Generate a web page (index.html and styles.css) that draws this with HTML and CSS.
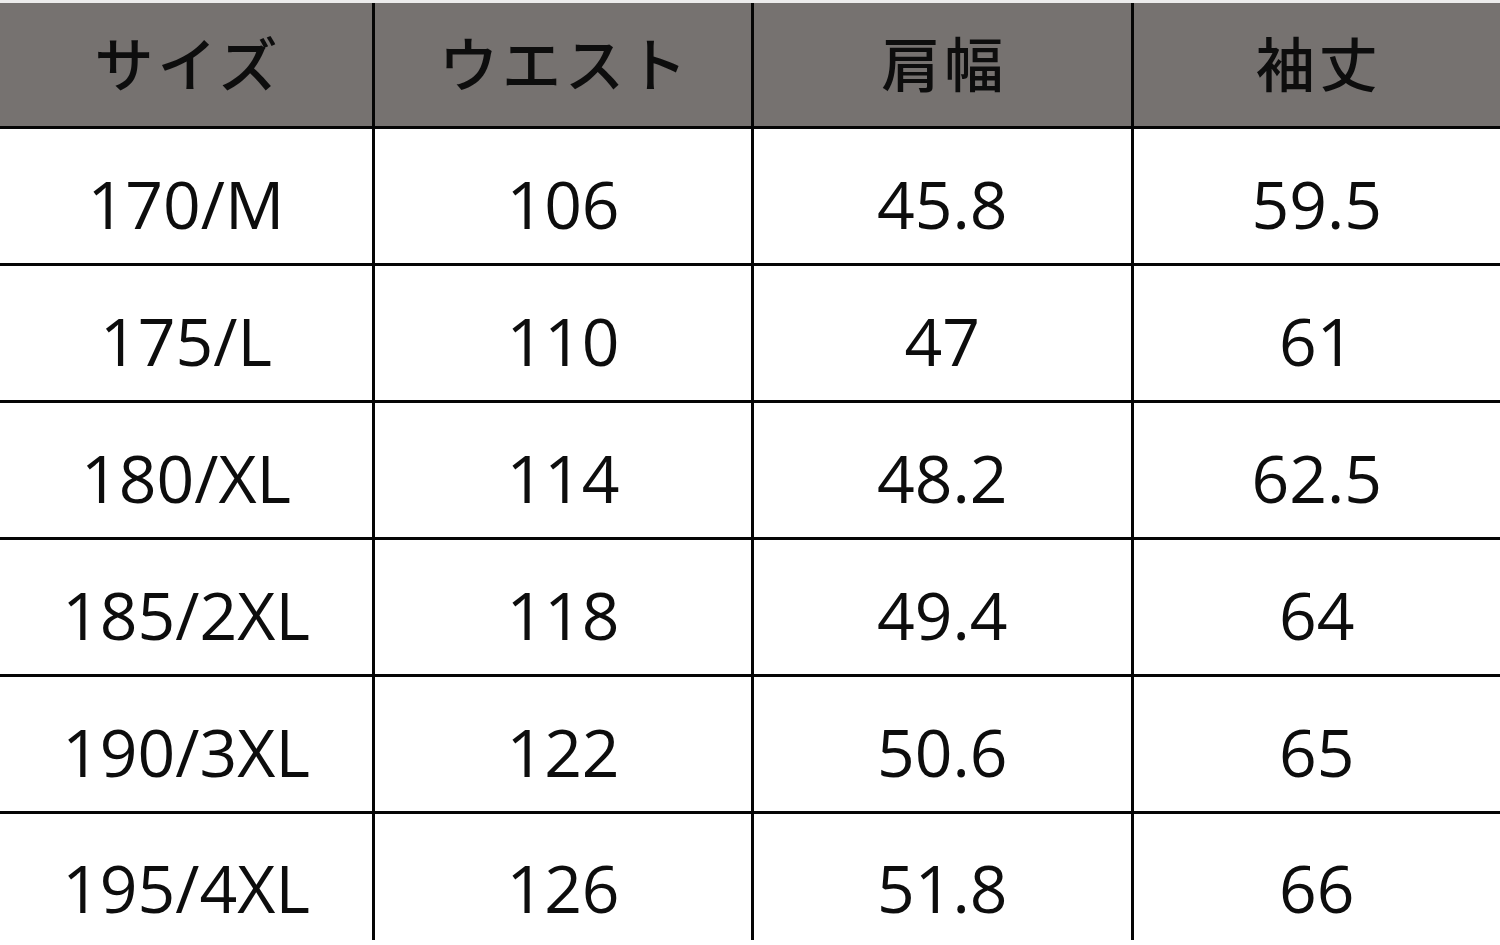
FILE: index.html
```html
<!DOCTYPE html>
<html lang="ja">
<head>
<meta charset="utf-8">
<title>サイズ表</title>
<link rel="stylesheet" href="styles.css">
</head>
<body>
<div class="sheet">
  <table class="size-table">
    <colgroup>
      <col class="c1"><col class="c2"><col class="c3"><col class="c4">
    </colgroup>
    <thead>
      <tr class="head-row">
        <th>サイズ</th>
        <th>ウエスト</th>
        <th>肩幅</th>
        <th>袖丈</th>
      </tr>
    </thead>
    <tbody>
      <tr><td>170/M</td><td>106</td><td>45.8</td><td>59.5</td></tr>
      <tr><td>175/L</td><td>110</td><td>47</td><td>61</td></tr>
      <tr><td>180/XL</td><td>114</td><td>48.2</td><td>62.5</td></tr>
      <tr><td>185/2XL</td><td>118</td><td>49.4</td><td>64</td></tr>
      <tr><td>190/3XL</td><td>122</td><td>50.6</td><td>65</td></tr>
      <tr class="last-row"><td>195/4XL</td><td>126</td><td>51.8</td><td>66</td></tr>
    </tbody>
  </table>
</div>
</body>
</html>
```

FILE: styles.css
```css
html, body {
  margin: 0;
  padding: 0;
  background: #ffffff;
}

body {
  width: 1500px;
  height: 945px;
  overflow: hidden;
}

.sheet {
  padding-top: 3px;
  background: #ececec;
}

.size-table {
  width: 1500px;
  border-collapse: collapse;
  table-layout: fixed;
  background: #ffffff;
  color: #0d0d0d;
}

.c1 { width: 373.5px; }
.c2 { width: 379px; }
.c3 { width: 379.5px; }
.c4 { width: 368px; }

.size-table th,
.size-table td {
  border: 3px solid #050505;
  padding: 0;
  text-align: center;
  vertical-align: middle;
}

.size-table tr > :first-child { border-left: none; }
.size-table tr > :last-child { border-right: none; }
.size-table thead th { border-top: none; }

.head-row th {
  height: 124px;
  background: #767270;
  font-family: "Noto Sans CJK JP", "Noto Sans", sans-serif;
  font-weight: 500;
  font-size: 59px;
  line-height: 1;
  letter-spacing: 4px;
  padding-bottom: 6px;
  padding-left: 4px;
  box-sizing: border-box;
}

.size-table td {
  height: 137px;
  font-family: "Open Sans", "Liberation Sans", sans-serif;
  font-weight: 500;
  font-size: 66px;
  line-height: 1;
  padding-top: 14px;
  box-sizing: border-box;
}

.last-row td {
  border-bottom: none;
  height: 128px;
  padding-top: 20px;
}
```
